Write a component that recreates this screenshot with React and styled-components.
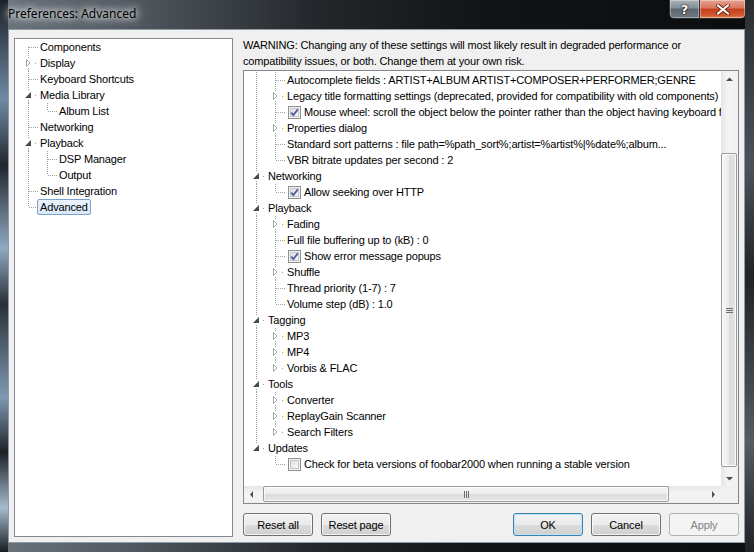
import React from "react";
import styled, { createGlobalStyle } from "styled-components";

const GlobalStyle = createGlobalStyle`
  html, body { margin: 0; padding: 0; background: #000; }
  body { font-family: "Liberation Sans", Arial, sans-serif; font-size: 11px; letter-spacing: -0.15px; color: #000; }
`;

const leftTree = [
  { label: "Components" },
  { label: "Display", collapsed: true },
  { label: "Keyboard Shortcuts" },
  { label: "Media Library", children: [{ label: "Album List" }] },
  { label: "Networking" },
  { label: "Playback", children: [{ label: "DSP Manager" }, { label: "Output" }] },
  { label: "Shell Integration" },
  { label: "Advanced", selected: true },
];

const displayChildren = [
  { label: "Autocomplete fields : ARTIST+ALBUM ARTIST+COMPOSER+PERFORMER;GENRE" },
  { label: "Legacy title formatting settings (deprecated, provided for compatibility with old components)", collapsed: true },
  { label: "Mouse wheel: scroll the object below the pointer rather than the object having keyboard focus", check: true },
  { label: "Properties dialog", collapsed: true },
  { label: "Standard sort patterns : file path=%path_sort%;artist=%artist%|%date%;album..." },
  { label: "VBR bitrate updates per second : 2" },
];

const rootRest = [
  { label: "Networking", children: [{ label: "Allow seeking over HTTP", check: true }] },
  {
    label: "Playback",
    children: [
      { label: "Fading", collapsed: true },
      { label: "Full file buffering up to (kB) : 0" },
      { label: "Show error message popups", check: true },
      { label: "Shuffle", collapsed: true },
      { label: "Thread priority (1-7) : 7" },
      { label: "Volume step (dB) : 1.0" },
    ],
  },
  {
    label: "Tagging",
    children: [
      { label: "MP3", collapsed: true },
      { label: "MP4", collapsed: true },
      { label: "Vorbis & FLAC", collapsed: true },
    ],
  },
  {
    label: "Tools",
    children: [
      { label: "Converter", collapsed: true },
      { label: "ReplayGain Scanner", collapsed: true },
      { label: "Search Filters", collapsed: true },
    ],
  },
  {
    label: "Updates",
    children: [{ label: "Check for beta versions of foobar2000 when running a stable version", check: false }],
  },
];

function flatten(nodes, guides, startsAtTop, out = []) {
  nodes.forEach((n, i) => {
    const last = i === nodes.length - 1;
    const first = i === 0 && startsAtTop;
    out.push({
      ...n,
      guides,
      pos: first ? "first" : last ? "last" : "mid",
      expander: n.children ? "expanded" : n.collapsed ? "collapsed" : null,
    });
    if (n.children) flatten(n.children, [...guides, !last], false, out);
  });
  return out;
}

const leftRows = flatten(leftTree, [], true);
const rightRows = [...flatten(displayChildren, [true], false), ...flatten(rootRest, [], false)];

const LINE = "#a0a0a0";

function Guide({ through }) {
  return (
    <svg width="19" height="16" style={{ flex: "none", display: "block" }}>
      {through && <line x1="9.5" y1="0" x2="9.5" y2="16" stroke={LINE} strokeDasharray="1 1" />}
    </svg>
  );
}

function Connector({ pos, expander }) {
  const y0 = pos === "first" ? 8 : 0;
  const y1 = pos === "last" ? 8 : 16;
  return (
    <svg width="19" height="16" style={{ flex: "none", display: "block" }}>
      {expander ? (
        <>
          {y0 < 4 && <line x1="9.5" y1={y0} x2="9.5" y2="3" stroke={LINE} strokeDasharray="1 1" />}
          {y1 > 13 && <line x1="9.5" y1="13" x2="9.5" y2={y1} stroke={LINE} strokeDasharray="1 1" />}
          <rect x="16" y="8" width="1" height="1" fill={LINE} />
          {expander === "collapsed" ? (
            <polygon points="7.5,4.5 7.5,11.5 11,8" fill="#fff" stroke="#a6a6a6" />
          ) : (
            <polygon points="12,5 12,11 6,11" fill="#4a4a4a" />
          )}
        </>
      ) : (
        <>
          <line x1="9.5" y1={y0} x2="9.5" y2={y1} stroke={LINE} strokeDasharray="1 1" />
          <line x1="10" y1="8.5" x2="19" y2="8.5" stroke={LINE} strokeDasharray="1 1" />
        </>
      )}
    </svg>
  );
}

function CheckBox({ checked }) {
  return (
    <svg width="13" height="13" style={{ flex: "none", display: "block", margin: "0 3px 0 1px" }}>
      <defs>
        <linearGradient id="cbg" x1="0" y1="0" x2="1" y2="1">
          <stop offset="0" stopColor="#dcdcdc" />
          <stop offset="1" stopColor="#fbfbfb" />
        </linearGradient>
      </defs>
      <rect x="0.5" y="0.5" width="12" height="12" fill="#f4f4f4" stroke="#8e8f8f" />
      <rect x="2.5" y="2.5" width="8" height="8" fill="url(#cbg)" stroke="#c4c4c4" />
      {checked && <path d="M3.2 6.6 L5.4 9 L9.8 3.4" fill="none" stroke="#4a5f97" strokeWidth="1.8" />}
    </svg>
  );
}

function TreeRows({ rows }) {
  return rows.map((r, i) => (
    <Row key={i}>
      {r.guides.map((g, j) => (
        <Guide key={j} through={g} />
      ))}
      <Connector pos={r.pos} expander={r.expander} />
      <Label $selected={r.selected}>
        {r.check !== undefined && <CheckBox checked={r.check} />}
        {r.label}
      </Label>
    </Row>
  ));
}

function Arrow({ dir }) {
  const pts = {
    up: "5,6 12,6 8.5,2.5",
    down: "5,4 12,4 8.5,7.5",
    left: "6,8.5 9,5 9,12",
    right: "11,8.5 8,5 8,12",
  }[dir];
  const vertical = dir === "up" || dir === "down";
  return (
    <ArrowCell $vertical={vertical}>
      <svg width="17" height={vertical ? 10 : 17} style={{ display: "block" }}>
        <polygon points={pts} fill="#4d4d4d" />
      </svg>
    </ArrowCell>
  );
}

export default function App() {
  return (
    <>
      <GlobalStyle />
      <Window>
        <TitleBar>
          <Title>Preferences: Advanced</Title>
          <Caption>
            <HelpButton>?</HelpButton>
            <CloseButton>
              <svg width="14" height="11" style={{ display: "block" }}>
                <path d="M2 1.5 L12 9.5 M12 1.5 L2 9.5" stroke="#5a1a10" strokeWidth="3.6" strokeLinecap="square" />
                <path d="M2 1.5 L12 9.5 M12 1.5 L2 9.5" stroke="#fff" strokeWidth="2" strokeLinecap="square" />
              </svg>
            </CloseButton>
          </Caption>
        </TitleBar>
        <Client>
          <Panel>
            <TreeRows rows={leftRows} />
          </Panel>
          <RightColumn>
            <Warning>
              WARNING: Changing any of these settings will most likely result in degraded performance or
              <br />
              compatibility issues, or both. Change them at your own risk.
            </Warning>
            <TreeBox>
              <Viewport>
                <TreeRows rows={rightRows} />
              </Viewport>
              <VScroll>
                <Arrow dir="up" />
                <VTrack>
                  <VThumb>
                    <svg width="7" height="5" style={{ display: "block" }}>
                      <path d="M0 0.5 H7 M0 2.5 H7 M0 4.5 H7" stroke="#6d6d6d" />
                    </svg>
                  </VThumb>
                </VTrack>
                <Arrow dir="down" />
              </VScroll>
              <HScroll>
                <Arrow dir="left" />
                <HTrack>
                  <HThumb>
                    <svg width="5" height="7" style={{ display: "block" }}>
                      <path d="M0.5 0 V7 M2.5 0 V7 M4.5 0 V7" stroke="#6d6d6d" />
                    </svg>
                  </HThumb>
                </HTrack>
                <Arrow dir="right" />
              </HScroll>
              <Corner />
            </TreeBox>
            <ButtonRow>
              <Button>Reset all</Button>
              <Button>Reset page</Button>
              <Spacer />
              <Button $default>OK</Button>
              <Button>Cancel</Button>
              <Button disabled>Apply</Button>
            </ButtonRow>
          </RightColumn>
        </Client>
      </Window>
    </>
  );
}

const Window = styled.div`
  width: 754px;
  height: 552px;
  display: flex;
  flex-direction: column;
  box-sizing: border-box;
  overflow: hidden;
  background:
    linear-gradient(180deg, #1b2026 0%, #6f8aa4 18%, #22272c 30%, #8fa9c2 45%, #2a3036 55%, #7f99b2 72%, #1d2126 82%, #a5bccf 92%, #1a1d21 100%) left top / 8px 100% no-repeat,
    linear-gradient(180deg, #2a2e33 0%, #4b525a 30%, #202327 50%, #555c63 80%, #1f2226 100%) right top / 9px 100% no-repeat,
    linear-gradient(90deg, #6a737b 0%, #50575e 18%, #23272b 42%, #111315 65%, #0c0d0f 100%);
`;

const TitleBar = styled.div`
  height: 29px;
  flex: none;
  display: flex;
  justify-content: space-between;
  align-items: flex-start;
`;

const Title = styled.div`
  font-family: "Noto Sans", "Open Sans", sans-serif;
  font-size: 12px;
  letter-spacing: 0;
  padding: 5px 0 0 8px;
  color: #000;
  text-shadow: 0 0 6px #fff, 0 0 10px rgba(255, 255, 255, 0.9), 0 0 16px rgba(230, 235, 240, 0.8);
`;

const Caption = styled.div`
  display: flex;
  margin-right: 8px;
`;

const CaptionButton = styled.div`
  height: 19px;
  box-sizing: border-box;
  display: flex;
  align-items: center;
  justify-content: center;
  border: 1px solid #2a2f34;
  border-top: none;
`;

const HelpButton = styled(CaptionButton)`
  width: 30px;
  border-right: none;
  border-bottom-left-radius: 5px;
  background: linear-gradient(180deg, #a9b2ba 0%, #838d96 45%, #5d666f 50%, #6f7982 100%);
  box-shadow: inset 0 0 0 1px rgba(255, 255, 255, 0.35);
  font-family: "DejaVu Sans", sans-serif;
  font-weight: bold;
  font-size: 13px;
  color: #fff;
  text-shadow: 0 0 2px #000, 0 0 1px #000;
`;

const CloseButton = styled(CaptionButton)`
  width: 47px;
  border-bottom-right-radius: 5px;
  background: linear-gradient(180deg, #e8a393 0%, #d7755d 45%, #c4401f 50%, #d2582e 85%, #e58a5f 100%);
  box-shadow: inset 0 0 0 1px rgba(255, 255, 255, 0.35);
`;

const Client = styled.div`
  flex: 1;
  margin: 0 9px 9px 8px;
  border: 1px solid #8e9aa6;
  background: #f0f0f0;
  padding: 8px 5px 5px 5px;
  display: grid;
  grid-template-columns: 219px 1fr;
  column-gap: 10px;
  min-height: 0;
`;

const Panel = styled.div`
  background: #fff;
  border: 1px solid #828790;
  padding: 0 0 0 4px;
  overflow: hidden;
`;

const Row = styled.div`
  height: 16px;
  display: flex;
  align-items: center;
  white-space: nowrap;
`;

const Label = styled.span`
  display: flex;
  align-items: center;
  height: 16px;
  box-sizing: border-box;
  padding: 0 2px;
  margin-left: -1px;
  border: 1px solid ${(p) => (p.$selected ? "#7da2ce" : "transparent")};
  border-radius: 2px;
  background: ${(p) => (p.$selected ? "linear-gradient(180deg, #ebf4fd, #d8e8f9)" : "none")};
`;

const RightColumn = styled.div`
  display: flex;
  flex-direction: column;
  min-width: 0;
`;

const Warning = styled.div`
  height: 32px;
  margin: -1px 0 1px 0;
  line-height: 16px;
  white-space: nowrap;
`;

const TreeBox = styled.div`
  height: 434px;
  box-sizing: border-box;
  border: 1px solid #828790;
  background: #fff;
  display: grid;
  grid-template-columns: 1fr 17px;
  grid-template-rows: 1fr 17px;
`;

const Viewport = styled.div`
  overflow: hidden;
  padding: 1px 0 0 3px;
  min-width: 0;
`;

const VScroll = styled.div`
  display: grid;
  grid-template-rows: 17px 1fr 17px;
  background: linear-gradient(90deg, #e6e6e6, #f4f4f4 40%, #f0f0f0);
`;

const HScroll = styled.div`
  display: grid;
  grid-template-columns: 17px 1fr 17px;
  background: linear-gradient(180deg, #e6e6e6, #f4f4f4 40%, #f0f0f0);
`;

const ArrowCell = styled.div`
  display: flex;
  align-items: center;
  justify-content: center;
`;

const VTrack = styled.div`
  display: flex;
  flex-direction: column;
`;

const VThumb = styled.div`
  margin: 65px 1px 0 0;
  height: 314px;
  box-sizing: border-box;
  border: 1px solid #9b9b9b;
  border-radius: 2px;
  background: linear-gradient(90deg, #f6f6f6 0%, #ececec 50%, #dcdcdc 51%, #e4e4e4 100%);
  box-shadow: inset 0 0 0 1px rgba(255, 255, 255, 0.8);
  display: flex;
  align-items: center;
  justify-content: center;
`;

const HTrack = styled.div`
  display: flex;
`;

const HThumb = styled.div`
  margin: 0 0 1px 2px;
  width: 406px;
  box-sizing: border-box;
  border: 1px solid #9b9b9b;
  border-radius: 2px;
  background: linear-gradient(180deg, #f6f6f6 0%, #ececec 50%, #dcdcdc 51%, #e4e4e4 100%);
  box-shadow: inset 0 0 0 1px rgba(255, 255, 255, 0.8);
  display: flex;
  align-items: center;
  justify-content: center;
`;

const Corner = styled.div`
  background: #f0f0f0;
`;

const ButtonRow = styled.div`
  margin-top: 9px;
  display: flex;
  gap: 8px;
`;

const Spacer = styled.div`
  flex: 1;
`;

const Button = styled.button`
  width: 70px;
  height: 23px;
  box-sizing: border-box;
  padding: 0;
  font-family: inherit;
  font-size: 11px;
  letter-spacing: inherit;
  color: ${(p) => (p.disabled ? "#838383" : "#000")};
  border: 1px solid ${(p) => (p.disabled ? "#adb2b5" : p.$default ? "#3c7fb1" : "#707070")};
  border-radius: 3px;
  background: ${(p) =>
    p.disabled
      ? "#f4f4f4"
      : "linear-gradient(180deg, #f2f2f2 0%, #ebebeb 50%, #dddddd 51%, #cfcfcf 100%)"};
  box-shadow: ${(p) =>
    p.disabled ? "none" : p.$default ? "inset 0 0 0 1px #bde4f8" : "inset 0 0 0 1px rgba(255,255,255,0.75)"};
`;
